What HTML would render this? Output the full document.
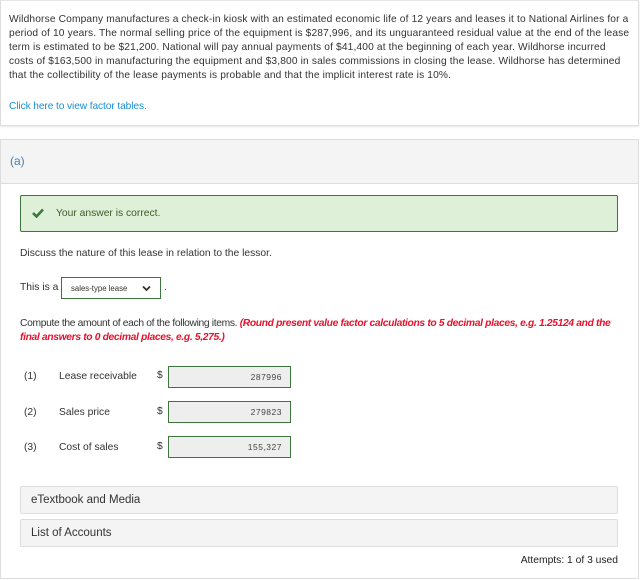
<!DOCTYPE html>
<html><head><style>
*{box-sizing:border-box;margin:0;padding:0}
body{width:640px;height:580px;background:#fff;font-family:"Liberation Sans",sans-serif;color:#333;font-size:10.3px;position:relative;overflow:hidden;letter-spacing:0}
.abs{position:absolute}
.card{left:0;top:0;width:639px;height:126px;border:1px solid #ddd;border-top:1px solid #e6e6e6;box-shadow:0 1px 2px rgba(0,0,0,.1)}
.p{left:9px;top:13px;line-height:14px;font-size:10.2px;white-space:nowrap;letter-spacing:0.15px}
.link{left:9px;top:101px;color:#1a8fd6;font-size:10.2px;letter-spacing:-0.1px}
.outer{left:0;top:139px;width:639px;height:440px;border:1px solid #ddd}
.sec{left:1px;top:140px;width:637px;height:44px;background:#f4f4f4;border-bottom:1px solid #ddd}
.sec span{position:absolute;left:9px;top:14px;font-size:12px;color:#4a7fae}
.ok{left:20px;top:195px;width:598px;height:37px;background:#dff0d8;border:1px solid #3c763d;border-radius:2px}
.ok .t{position:absolute;left:35px;top:12px;color:#3c5a2a;font-size:10.3px}
.inp{width:123px;height:22px;background:#eee;border:1px solid #3c763d;text-align:right;padding-right:8px;font-size:8.5px;line-height:20px;letter-spacing:0.5px;color:#444}
.bar{left:20px;width:598px;height:28px;background:#f4f4f4;border:1px solid #ddd;border-radius:2px;font-size:11.5px;padding:7px 10px;color:#333}
</style></head><body>
<div class="abs card"></div>
<div class="abs p">Wildhorse Company manufactures a check-in kiosk with an estimated economic life of 12 years and leases it to National Airlines for a<br>period of 10 years. The normal selling price of the equipment is $287,996, and its unguaranteed residual value at the end of the lease<br>term is estimated to be $21,200. National will pay annual payments of $41,400 at the beginning of each year. Wildhorse incurred<br>costs of $163,500 in manufacturing the equipment and $3,800 in sales commissions in closing the lease. Wildhorse has determined<br>that the collectibility of the lease payments is probable and that the implicit interest rate is 10%.</div>
<div class="abs link">Click here to view factor tables.</div>
<div class="abs outer"></div>
<div class="abs sec"><span>(a)</span></div>
<div class="abs ok"><svg class="abs" style="left:11px;top:12px" width="12" height="10" viewBox="0 0 12 10"><path d="M1 5 L4.5 8.5 L11 1.5" stroke="#3c763d" stroke-width="2.6" fill="none"/></svg><span class="t">Your answer is correct.</span></div>
<div class="abs" style="left:20px;top:248px">Discuss the nature of this lease in relation to the lessor.</div>
<div class="abs" style="left:20px;top:282px">This is a</div>
<div class="abs" style="left:61px;top:277px;width:100px;height:22px;border:1px solid #3c763d;font-size:7.8px;padding:6px 0 0 9px">sales-type lease<svg class="abs" style="left:80px;top:7px" width="9" height="7" viewBox="0 0 9 7"><path d="M1 1.5 L4.5 5 L8 1.5" stroke="#333" stroke-width="1.8" fill="none"/></svg></div>
<div class="abs" style="left:164px;top:282px">.</div>
<div class="abs" style="left:20px;top:317px;line-height:14px;letter-spacing:-0.35px;white-space:nowrap">Compute the amount of each of the following items. <i style="color:#e8112d;font-weight:bold">(Round present value factor calculations to 5 decimal places, e.g. 1.25124 and the<br>final answers to 0 decimal places, e.g. 5,275.)</i></div>
<div class="abs" style="left:24px;top:371px">(1)</div><div class="abs" style="left:59px;top:371px">Lease receivable</div><div class="abs" style="left:157px;top:370px">$</div><div class="abs inp" style="left:168px;top:366px">287996</div>
<div class="abs" style="left:24px;top:407px">(2)</div><div class="abs" style="left:59px;top:407px">Sales price</div><div class="abs" style="left:157px;top:406px">$</div><div class="abs inp" style="left:168px;top:401px">279823</div>
<div class="abs" style="left:24px;top:442px">(3)</div><div class="abs" style="left:59px;top:442px">Cost of sales</div><div class="abs" style="left:157px;top:441px">$</div><div class="abs inp" style="left:168px;top:436px">155,327</div>
<div class="abs bar" style="top:486px">eTextbook and Media</div>
<div class="abs bar" style="top:519px">List of Accounts</div>
<div class="abs" style="right:22px;top:555px;color:#222">Attempts: 1 of 3 used</div>
</body></html>
